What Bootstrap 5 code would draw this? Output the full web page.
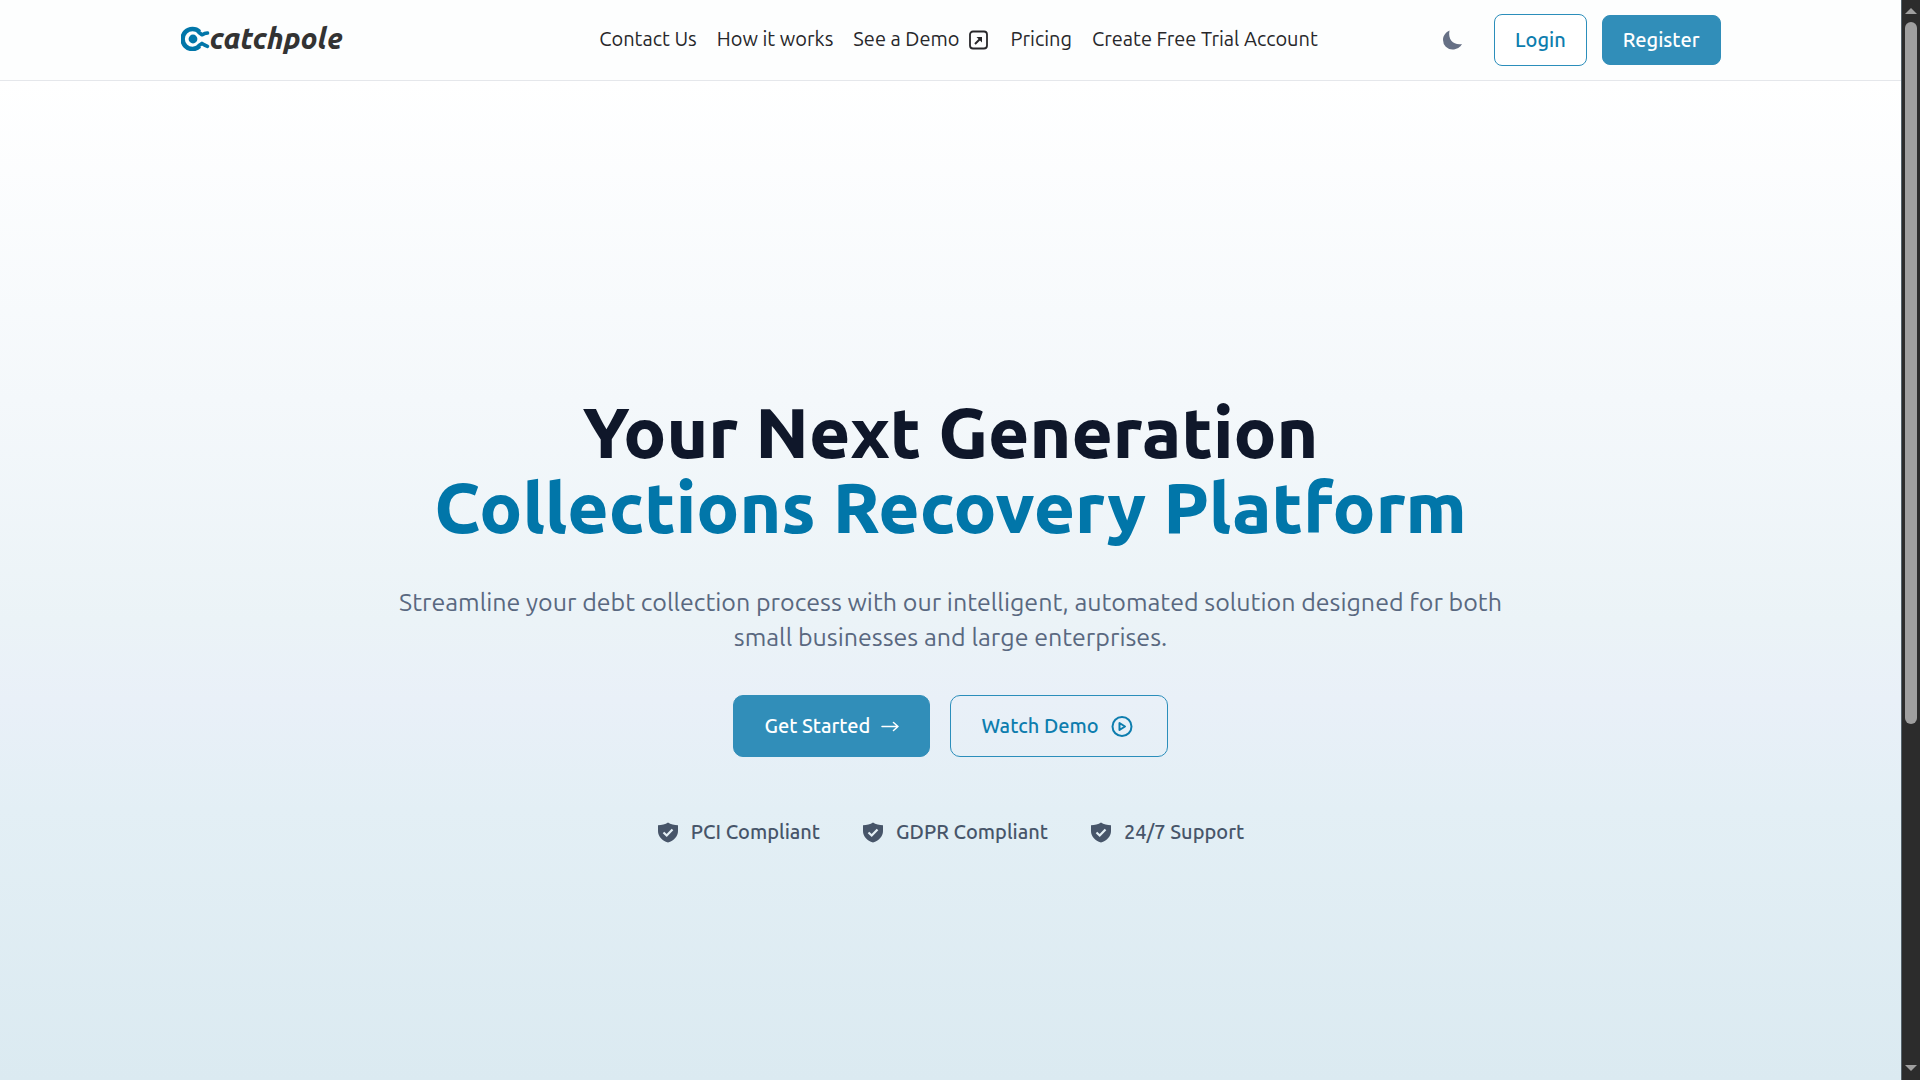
<!DOCTYPE html>
<html lang="en">
<head>
<meta charset="utf-8">
<meta name="viewport" content="width=device-width, initial-scale=1">
<title>Catchpole</title>
<link href="https://cdn.jsdelivr.net/npm/bootstrap@5.3.0/dist/css/bootstrap.min.css" rel="stylesheet">
<style>
  :root { --brand: #0176a9; --ink: #0f172a; --slate: #475569; }
  body { font-family: Ubuntu, "Noto Sans", sans-serif; font-size: 20px; line-height: 28px; color: #27272a; }
  .page-column { min-width: 0; background: linear-gradient(180deg, #fff 80px, #f4f8fb 400px, #ebf3f7 620px, #e9f0f8 700px, #e3eff5 810px, #dbeaf1 100%); }
  .site-header { min-height: 81px; background: #fdfefe; border-bottom: 1px solid #e5e7eb; }
  .site-width { max-width: 1540px; }
  .site-side { flex: 1 1 0; }
  .brand-name { font-size: 29px; line-height: 32px; font-weight: 800; font-style: italic; color: #333; }
  .site-links { gap: 20px; margin-left: 16px; padding-bottom: 2px; }
  .site-links a { color: #27272a; text-decoration: none; }
  .theme-toggle { margin-right: 29px; color: #667085; }
  .site-actions { gap: 15px; }
  .btn { --bs-btn-font-size: 20px; --bs-btn-font-weight: 500; --bs-btn-line-height: 28px; --bs-btn-border-radius: 8px; }
  .btn-brand { --bs-btn-color: #fff; --bs-btn-bg: #318eb9; --bs-btn-border-color: #318eb9; --bs-btn-hover-color: #fff; --bs-btn-hover-bg: #0176a9; }
  .btn-brand-line { --bs-btn-color: #0d7dae; --bs-btn-border-color: #2b8ebb; --bs-btn-hover-color: #fff; --bs-btn-hover-bg: #0176a9; }
  .btn-header { --bs-btn-padding-x: 20px; --bs-btn-padding-y: 10px; }
  .btn-login { --bs-btn-padding-y: 11px; --bs-btn-bg: #fff; }
  .btn-hero { --bs-btn-padding-x: 30px; --bs-btn-padding-y: 16px; --bs-btn-border-radius: 10px; }
  .hero { padding-top: 78px; }
  .hero-title { font-size: 71px; line-height: 75px; font-weight: 800; color: var(--ink); }
  .hero-title span { color: var(--brand); }
  .hero-copy { max-width: 1120px; margin: 41px 0 40px; font-size: 25px; line-height: 35px; color: #596880; }
  .hero-actions { gap: 20px; }
  .trust-list { gap: 42px; margin: 61px 0 0; color: var(--slate); font-weight: 500; }
  .trust-list li { gap: 12px; }
  .scroll-rail { width: 19px; background: #2c2c2c; border-left: 1px solid #55636b; padding: 8px 0 9px; }
  .scroll-thumb { width: 12px; background: #9f9f9f; flex: 0 0 66%; margin-top: 8px; }
</style>
<script src="https://cdn.jsdelivr.net/npm/bootstrap@5.3.0/dist/js/bootstrap.bundle.min.js"></script>
</head>
<body>
<div class="d-flex min-vh-100">
  <div class="page-column flex-grow-1 d-flex flex-column">
    <header class="site-header d-flex align-items-center">
      <div class="site-width w-100 mx-auto d-flex align-items-center">
        <div class="site-side">
          <a href="#" class="d-inline-flex align-items-center text-decoration-none">
            <svg width="29" height="26" viewBox="0 0 29 26" fill="none" aria-hidden="true">
              <path d="M18.500 6.800A10 10 0 1 0 18.500 21.200" stroke="#0176a9" stroke-width="4.600"/>
              <circle cx="12" cy="14" r="4.400" fill="#0176a9"/>
              <path d="M18 7.500L21 9.800L23.500 8.600L26.500 8M18 20.500L21 18.400L23.500 20L26.500 21.300" stroke="#0176a9" stroke-width="3.600" stroke-linecap="round" stroke-linejoin="round"/>
            </svg>
            <span class="brand-name">catchpole</span>
          </a>
        </div>
        <nav class="site-links d-flex align-items-center text-nowrap" aria-label="Main">
          <a href="#">Contact Us</a>
          <a href="#">How it works</a>
          <a href="#" class="d-flex align-items-center gap-2">See a Demo
            <svg width="23" height="24" viewBox="0 0 23 24" fill="none" stroke="currentColor" stroke-width="1.800" aria-hidden="true">
              <rect x="3" y="4.500" width="17" height="17" rx="3"/>
              <path d="M8 17L13 12" stroke-width="2"/><path d="M9.500 10H15v5.500z" fill="currentColor" stroke="none"/>
            </svg>
          </a>
          <a href="#">Pricing</a>
          <a href="#">Create Free Trial Account</a>
        </nav>
        <div class="site-side site-actions d-flex align-items-center justify-content-end">
          <button type="button" class="theme-toggle btn p-0 border-0 d-flex me-3" aria-label="Toggle dark mode">
            <svg width="21" height="20" viewBox="0 0 21 20" fill="#667085" aria-hidden="true"><path d="M7.500 0.500C4 2 1 5.500 1 10a9.500 9.500 0 0 0 9.500 9.500c4.300 0 8-2.500 9.500-5.500C12.500 15.500 5.500 10.500 7.500 .5z"/></svg>
          </button>
          <button type="button" class="btn btn-brand-line btn-header btn-login">Login</button>
          <button type="button" class="btn btn-brand btn-header">Register</button>
        </div>
      </div>
    </header>
    <main class="hero flex-grow-1 d-flex flex-column align-items-center justify-content-center text-center">
      <h1 class="hero-title mb-0">Your Next Generation<br><span>Collections Recovery Platform</span></h1>
      <p class="hero-copy">Streamline your debt collection process with our intelligent, automated solution designed for both small businesses and large enterprises.</p>
      <div class="hero-actions d-flex flex-wrap justify-content-center">
        <button type="button" class="btn btn-brand btn-hero d-flex align-items-center">Get Started
          <svg class="ms-2" width="21" height="24" viewBox="0 0 21 24" fill="none" stroke="currentColor" stroke-width="1.500" stroke-linecap="round" stroke-linejoin="round" aria-hidden="true"><path d="M4 12.500h16M15.500 8.500l4.500 4-4.500 4"/></svg>
        </button>
        <button type="button" class="btn btn-brand-line btn-hero d-flex align-items-center">Watch Demo
          <svg class="ms-2" width="30" height="24" viewBox="0 0 30 24" fill="none" stroke="currentColor" stroke-width="2" stroke-linejoin="round" aria-hidden="true"><circle cx="15" cy="12.500" r="9.500"/><path d="M12.500 9v7l5.500-3.500z"/></svg>
        </button>
      </div>
      <ul class="trust-list list-unstyled d-flex flex-wrap justify-content-center">
        <li class="d-flex align-items-center"><svg width="22" height="22" viewBox="0 0 22 22" aria-hidden="true"><path d="M11 1.500C8.500 3.300 4.500 4.200 1 4.200V10c0 5.500 4 9.500 10 11.500 6-2 10-6 10-11.500V4.200c-3.500 0-7.500-.9-10-2.700z" fill="#475569"/><path d="M6.500 11.500l3.200 3L15.500 8.500" fill="none" stroke="#e4eff5" stroke-width="2.200"/></svg>PCI Compliant</li>
        <li class="d-flex align-items-center"><svg width="22" height="22" viewBox="0 0 22 22" aria-hidden="true"><path d="M11 1.500C8.500 3.300 4.500 4.200 1 4.200V10c0 5.500 4 9.500 10 11.500 6-2 10-6 10-11.500V4.200c-3.500 0-7.500-.9-10-2.700z" fill="#475569"/><path d="M6.500 11.500l3.200 3L15.500 8.500" fill="none" stroke="#e4eff5" stroke-width="2.200"/></svg>GDPR Compliant</li>
        <li class="d-flex align-items-center"><svg width="22" height="22" viewBox="0 0 22 22" aria-hidden="true"><path d="M11 1.500C8.500 3.300 4.500 4.200 1 4.200V10c0 5.500 4 9.500 10 11.500 6-2 10-6 10-11.500V4.200c-3.500 0-7.500-.9-10-2.700z" fill="#475569"/><path d="M6.500 11.500l3.200 3L15.500 8.500" fill="none" stroke="#e4eff5" stroke-width="2.200"/></svg>24/7 Support</li>
      </ul>
    </main>
  </div>
  <div class="scroll-rail vh-100 sticky-top flex-shrink-0 d-flex flex-column align-items-center" aria-hidden="true">
    <svg class="flex-shrink-0" width="12" height="6" viewBox="0 0 12 6"><path d="M0 6L6 0l6 6z" fill="#9f9f9f"/></svg>
    <div class="scroll-thumb rounded-pill"></div>
    <svg class="mt-auto flex-shrink-0" width="12" height="6" viewBox="0 0 12 6"><path d="M0 0l6 6 6-6z" fill="#9f9f9f"/></svg>
  </div>
</div>
</body>
</html>
